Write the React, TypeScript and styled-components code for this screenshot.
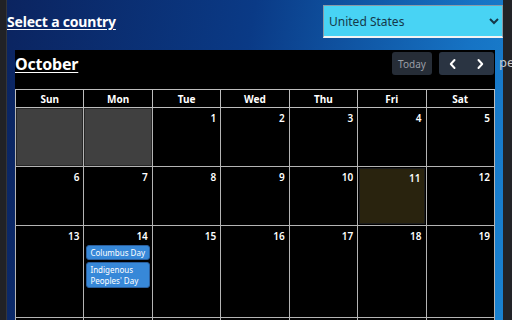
import React from 'react';
import styled, { createGlobalStyle } from 'styled-components';

// ── Data ──────────────────────────────────────────────────────────────────────

const DAYS = ['Sun', 'Mon', 'Tue', 'Wed', 'Thu', 'Fri', 'Sat'];

type Cell = { day?: number; other?: boolean; today?: boolean; events?: string[] };

// the fourth week sits below the fold, only its top border shows
const WEEKS: { height: number; cells: Cell[] }[] = [
  {
    height: 59,
    cells: [
      { day: 29, other: true },
      { day: 30, other: true },
      { day: 1 }, { day: 2 }, { day: 3 }, { day: 4 }, { day: 5 }
    ]
  },
  {
    height: 59,
    cells: [{ day: 6 }, { day: 7 }, { day: 8 }, { day: 9 }, { day: 10 }, { day: 11, today: true }, { day: 12 }]
  },
  {
    height: 92,
    cells: [
      { day: 13 },
      { day: 14, events: ['Columbus Day', "Indigenous Peoples' Day"] },
      { day: 15 }, { day: 16 }, { day: 17 }, { day: 18 }, { day: 19 }
    ]
  },
  {
    height: 59,
    cells: [{}, {}, {}, {}, {}, {}, {}]
  }
];

// ── Component ─────────────────────────────────────────────────────────────────

export default function App() {
  return (
    <>
      <GlobalStyle />
      <Page>
        <LeftGutter />
        <Panel>
          <TopBar>
            <Heading>Select a country</Heading>
            <CountrySelect defaultValue="us">
              <option value="us">United States</option>
              <option value="ca">Canada</option>
              <option value="uk">United Kingdom</option>
            </CountrySelect>
          </TopBar>

          <Calendar>
            <Toolbar>
              <MonthTitle>October</MonthTitle>
              <ToolButtons>
                <TodayButton>Today</TodayButton>
                <NavGroup>
                  <NavButton aria-label="prev">
                    <svg width="10" height="12" viewBox="0 0 10 12" fill="none">
                      <path d="M6.5 2 2.8 6l3.7 4" stroke="#fff" strokeWidth="2" strokeLinecap="round" strokeLinejoin="round" />
                    </svg>
                  </NavButton>
                  <NavButton aria-label="next">
                    <svg width="10" height="12" viewBox="0 0 10 12" fill="none">
                      <path d="M3.5 2 7.2 6l-3.7 4" stroke="#fff" strokeWidth="2" strokeLinecap="round" strokeLinejoin="round" />
                    </svg>
                  </NavButton>
                </NavGroup>
              </ToolButtons>
            </Toolbar>

            <Grid>
              <thead>
                <tr>
                  {DAYS.map((d) => (
                    <HeadCell key={d}>{d}</HeadCell>
                  ))}
                </tr>
              </thead>
              <tbody>
                {WEEKS.map((week, wi) => (
                  <tr key={wi}>
                    {week.cells.map((c, ci) => (
                      <DayCell key={ci} $height={week.height}>
                        <DayInner $other={c.other} $today={c.today}>
                          {!c.other && c.day && <DayNum>{c.day}</DayNum>}
                          {c.events?.map((e) => (
                            <EventPill key={e}>{e}</EventPill>
                          ))}
                        </DayInner>
                      </DayCell>
                    ))}
                  </tr>
                ))}
              </tbody>
            </Grid>
          </Calendar>
        </Panel>
        <RightGutter>
          <GhostText>pe</GhostText>
        </RightGutter>
      </Page>
    </>
  );
}

// ── Styled components ─────────────────────────────────────────────────────────

const GlobalStyle = createGlobalStyle`
  html, body {
    margin: 0;
    padding: 0;
    background: #202124;
    overflow: hidden;
  }
  body {
    font-family: 'Noto Sans', 'Open Sans', sans-serif;
  }
`;

const Page = styled.div`
  display: flex;
  width: 512px;
  height: 320px;
  overflow: hidden;
`;

const LeftGutter = styled.div`
  width: 6px;
  flex-shrink: 0;
  background: #212226;
  border-right: 1px solid #34363b;
`;

const Panel = styled.div`
  width: 496px;
  flex-shrink: 0;
  background: linear-gradient(100deg, #0b2460 0%, #0a3a86 45%, #1673c4 85%, #1a82d0 100%);
  display: flex;
  flex-direction: column;
  overflow: hidden;
`;

const RightGutter = styled.div`
  flex: 1;
  background: #222327;
  position: relative;
`;

const GhostText = styled.span`
  position: absolute;
  left: -4px;
  top: 53px;
  font-family: 'Noto Sans', sans-serif;
  font-size: 13px;
  color: #c8c8c8;
`;

const TopBar = styled.div`
  flex-shrink: 0;
  display: flex;
  justify-content: space-between;
  align-items: flex-start;
  height: 50px;
  padding-top: 5px;
  box-sizing: border-box;
`;

const Heading = styled.h2`
  margin: 7px 0 0;
  font-size: 14px;
  font-weight: 700;
  color: #fff;
  text-decoration: underline;
  text-underline-offset: 2px;
  letter-spacing: -0.2px;
`;

const CountrySelect = styled.select`
  width: 180px;
  height: 33px;
  padding: 0 1px;
  background: #48d3f4;
  color: #15384a;
  border: 1px solid #8a9aa6;
  border-bottom: 2px solid #f4f4f4;
  font-family: 'Noto Sans', sans-serif;
  font-size: 12px;
  outline: none;
`;

const Calendar = styled.div`
  flex-shrink: 0;
  margin-left: 8px;
  width: 480px;
  background: #000;
  display: flex;
  flex-direction: column;
`;

const Toolbar = styled.div`
  flex-shrink: 0;
  display: flex;
  justify-content: space-between;
  align-items: flex-start;
  height: 39px;
  padding-top: 2px;
  box-sizing: border-box;
`;

const MonthTitle = styled.h1`
  margin: 1px 0 0;
  font-size: 16px;
  font-weight: 700;
  color: #fff;
  text-decoration: underline;
  text-underline-offset: 2px;
  letter-spacing: -0.2px;
`;

const ToolButtons = styled.div`
  display: flex;
  gap: 7px;
  margin-right: 1px;
`;

const TodayButton = styled.button`
  width: 40px;
  height: 23px;
  padding: 0;
  border: none;
  border-radius: 3px;
  background: #262d37;
  color: #9a9ea6;
  font-family: 'Noto Sans', sans-serif;
  font-size: 10px;
`;

const NavGroup = styled.div`
  display: flex;
  width: 55px;
  height: 23px;
  border-radius: 3px;
  background: #2a3442;
  overflow: hidden;
`;

const NavButton = styled.button`
  flex: 1;
  display: flex;
  align-items: center;
  justify-content: center;
  border: none;
  background: transparent;
  padding: 0;
`;

const Grid = styled.table`
  width: 480px;
  table-layout: fixed;
  border-collapse: collapse;
  border: 1px solid #9a9a9a;
`;

const HeadCell = styled.th`
  height: 17px;
  padding: 0;
  border: 1px solid #bdbdbd;
  font-size: 10px;
  font-weight: 700;
  color: #fff;
  text-align: center;
`;

const DayCell = styled.td<{ $height: number }>`
  height: ${(p) => p.$height - 1}px;
  padding: 0;
  border: 1px solid #b4b4b4;
  vertical-align: top;
`;

const DayInner = styled.div<{ $other?: boolean; $today?: boolean }>`
  box-sizing: border-box;
  height: 100%;
  display: flex;
  flex-direction: column;
  align-items: stretch;
  padding: 3px 1px 0;
  ${(p) =>
    p.$other &&
    `
    background: #404040;
    box-shadow: inset 0 0 0 1px #262626;
  `}
  ${(p) =>
    p.$today &&
    `
    background: #29230e;
    box-shadow: inset 0 0 0 1px #1b1b1b;
    margin: 1px;
    height: calc(100% - 2px);
  `}
`;

const DayNum = styled.span`
  align-self: flex-end;
  padding-right: 3px;
  font-size: 10px;
  font-weight: 600;
  color: #fff;
  line-height: 14px;
`;

const EventPill = styled.div`
  margin: 2px 1px 0;
  padding: 1px 3px;
  background: #3788d8;
  border: 1px solid #2a5e9c;
  border-radius: 3px;
  font-size: 8px;
  line-height: 11px;
  color: #fff;
`;
